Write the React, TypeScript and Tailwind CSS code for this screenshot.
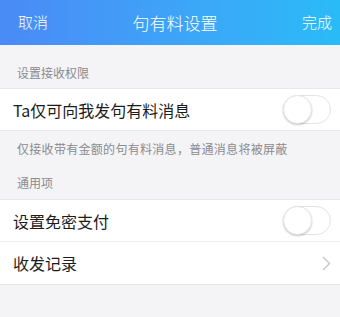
import React from "react";

function Toggle() {
  return (
    <div className="relative w-[48px] h-[29px] rounded-full border border-[#e3e3e6] bg-white">
      <div className="absolute left-[-1px] top-[-1px] w-[29px] h-[29px] rounded-full bg-white border border-[#e6e6e9] shadow-[0_1px_2px_rgba(0,0,0,0.22)]" />
    </div>
  );
}

export default function App() {
  return (
    <div
      className="w-[340px] h-[317px] bg-[#f4f4f7] overflow-hidden"
      style={{ fontFamily: '"Noto Sans CJK SC", "Noto Sans", sans-serif' }}
    >
      <div className="h-[45px] flex items-center justify-between px-[18px] bg-gradient-to-r from-[#4a8af6] to-[#29bbf8] text-white font-light">
        <span className="text-[15px] w-[60px]">取消</span>
        <span className="text-[17px]">句有料设置</span>
        <span className="text-[15px] w-[60px] text-right mr-[-10px]">完成</span>
      </div>
      <div className="h-[43px] flex items-center px-[17px] text-[12px] text-[#8a8a8f] pt-[12px]">
        设置接收权限
      </div>
      <div className="bg-white border-t border-b border-[#e8e8ec] h-[43px] flex items-center justify-between pl-[13px] pr-[9px]">
        <span className="text-[16px] text-[#1c1c1c]">Ta仅可向我发句有料消息</span>
        <Toggle />
      </div>
      <div className="h-[35px] flex items-center px-[17px] text-[12px] tracking-[0.3px] text-[#8a8a8f]">
        仅接收带有金额的句有料消息，普通消息将被屏蔽
      </div>
      <div className="h-[33px] flex items-center px-[17px] text-[12px] text-[#8a8a8f]">
        通用项
      </div>
      <div className="bg-white border-t border-b border-[#e8e8ec]">
        <div className="h-[42px] flex items-center justify-between pl-[13px] pr-[9px] border-b border-[#ededf0]">
          <span className="text-[16px] text-[#1c1c1c]">设置免密支付</span>
          <Toggle />
        </div>
        <div className="h-[42px] flex items-center justify-between pl-[13px] pr-[9px]">
          <span className="text-[16px] text-[#1c1c1c]">收发记录</span>
          <svg width="9" height="15" viewBox="0 0 9 15" fill="none">
            <path d="M1 1l6.5 6.5L1 14" stroke="#c4c4c8" strokeWidth="1.3" />
          </svg>
        </div>
      </div>
    </div>
  );
}
